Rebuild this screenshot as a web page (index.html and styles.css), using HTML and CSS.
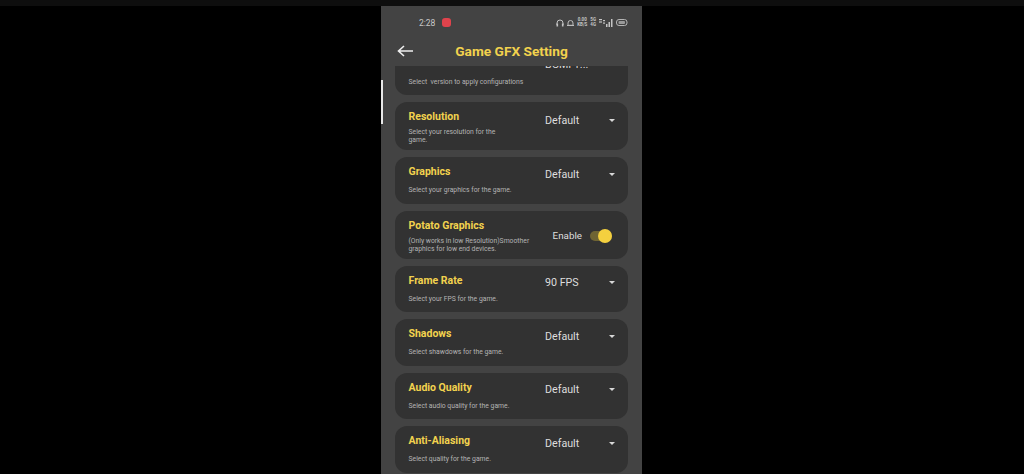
FILE: index.html
```html
<!DOCTYPE html>
<html lang="en">
<head>
<meta charset="utf-8">
<title>Game GFX Setting</title>
<link rel="stylesheet" href="styles.css">
</head>
<body>
<div class="topband"></div>
<main class="phone">
  <div class="scrollmark"></div>
  <div class="status">
    <span class="time">2:28</span>
    <span class="rec"></span>
    <span class="status-icons">
      <svg class="ic" width="8" height="8" viewBox="0 0 8 8"><path d="M1 6V4a3 3 0 0 1 6 0v2" fill="none" stroke="#c4c4c4" stroke-width="1"/><rect x=".5" y="4.5" width="1.6" height="3" fill="#c4c4c4"/><rect x="5.9" y="4.5" width="1.6" height="3" fill="#c4c4c4"/></svg>
      <svg class="ic" width="7" height="8" viewBox="0 0 7 8"><path d="M1 6.3V4a2.5 2.5 0 0 1 5 0v2.3z" fill="none" stroke="#bdbdbd"/><rect x="0" y="6" width="7" height="1" fill="#bdbdbd"/></svg>
      <span class="speed">0.00<br>KB/S</span>
      <span class="net">5G<br>4G</span>
      <svg class="ic" width="14" height="8" viewBox="0 0 14 8"><g fill="#c4c4c4"><rect x="0" y="0" width="3" height="1.2"/><rect x="0" y="2.4" width="3" height="1.2"/><rect x="4" y="1" width="2" height="1.2"/><rect x="4" y="3.5" width="2" height="1.2"/><rect x="7" y="5" width="1.5" height="3"/><rect x="9.5" y="3" width="1.5" height="5"/><rect x="12" y="0" width="1.5" height="8"/></g></svg>
      <svg class="ic" width="12" height="7" viewBox="0 0 12 7"><rect x=".5" y=".5" width="10.5" height="6" rx="2.5" fill="none" stroke="#b5b5b5"/><rect x="2.5" y="2" width="6.5" height="3" rx="1" fill="#9a9a9a"/></svg>
    </span>
  </div>
  <header class="appbar">
    <svg class="back" width="17" height="12" viewBox="0 0 17 12"><path d="M16 6H2M7 1 1.5 6 7 11" fill="none" stroke="#efefef" stroke-width="1.6"/></svg>
    <h1>Game GFX Setting</h1>
  </header>
  <section class="list">
    <article class="card clipped">
      <div class="info"><h2>Version</h2><p>Select &nbsp;version to apply configurations</p></div>
      <div class="control"><span class="value">BGMI 1...</span><span class="caret"></span></div>
    </article>
    <article class="card tall">
      <div class="info narrow"><h2>Resolution</h2><p>Select your resolution for the game.</p></div>
      <div class="control"><span class="value">Default</span><span class="caret"></span></div>
    </article>
    <article class="card">
      <div class="info"><h2>Graphics</h2><p>Select your graphics for the game.</p></div>
      <div class="control"><span class="value">Default</span><span class="caret"></span></div>
    </article>
    <article class="card tall">
      <div class="info"><h2>Potato Graphics</h2><p>(Only works in low Resolution)Smoother graphics for low end devices.</p></div>
      <div class="toggle-wrap"><span class="toggle-label">Enable</span><span class="switch"><span class="knob"></span></span></div>
    </article>
    <article class="card">
      <div class="info"><h2>Frame Rate</h2><p>Select your FPS for the game.</p></div>
      <div class="control"><span class="value">90 FPS</span><span class="caret"></span></div>
    </article>
    <article class="card">
      <div class="info"><h2>Shadows</h2><p>Select shawdows for the game.</p></div>
      <div class="control"><span class="value">Default</span><span class="caret"></span></div>
    </article>
    <article class="card">
      <div class="info"><h2>Audio Quality</h2><p>Select audio quality for the game.</p></div>
      <div class="control"><span class="value">Default</span><span class="caret"></span></div>
    </article>
    <article class="card">
      <div class="info"><h2>Anti-Aliasing</h2><p>Select quality for the game.</p></div>
      <div class="control"><span class="value">Default</span><span class="caret"></span></div>
    </article>
  </section>
</main>
</body>
</html>
```
FILE: styles.css
```css
* { box-sizing: border-box; }
html, body { margin: 0; height: 474px; overflow: hidden; background: #000; font-family: Roboto, "Liberation Sans", sans-serif; }
.topband { height: 6px; background: #0e0e0e; }
.phone { position: relative; width: 261px; height: 468px; margin-left: 381px; background: #434343; display: flex; flex-direction: column; overflow: hidden; }
.scrollmark { position: absolute; left: 0; top: 74px; width: 2px; height: 44px; background: #e8e8e8; }
.status { height: 33px; flex: none; display: flex; align-items: center; padding: 0 14px 0 38px; color: #c8c8c8; }
.time { font-size: 8.5px; }
.rec { width: 9px; height: 9px; margin-left: 7px; border-radius: 3px; background: #e0434c; }
.status-icons { margin-left: auto; display: flex; align-items: center; gap: 3px; }
.ic { display: block; }
.speed, .net { font-size: 4.5px; line-height: 4.5px; font-weight: 700; color: #c4c4c4; text-align: center; }
.appbar { height: 27px; flex: none; display: flex; align-items: center; position: relative; justify-content: center; padding-bottom: 3px; }
.back { position: absolute; left: 16px; top: 6px; }
.appbar h1 { margin: 0; font-size: 13.7px; font-weight: 700; color: #f2d24e; }
.list { flex: 1; min-height: 0; overflow: hidden; padding: 0 14px; display: flex; flex-direction: column; gap: 7px; }
.card { flex: none; height: 46.5px; background: #323232; border-radius: 12px; display: flex; justify-content: space-between; padding: 8px 14px 0 13.5px; }
.card.tall { height: 48px; }
.card.clipped { height: 48px; margin-top: -19px; }
.info { width: 125px; }
.info.narrow { width: 100px; }
.info h2 { margin: 0; font-size: 10.5px; line-height: 14px; font-weight: 700; color: #f2d24e; }
.info p { margin: 7px 0 0; font-size: 6.8px; line-height: 8px; color: #b4b4b4; }
.card.tall .info p { margin-top: 4px; }
.card.clipped .info p { margin-top: 9px; }
.control { width: 69px; height: 20px; margin-top: -1px; display: flex; justify-content: space-between; align-items: center; }
.card.tall .control { margin-top: 0; }
.value { font-size: 10.7px; color: #dedede; }
.toggle-label { font-size: 9.8px; color: #dedede; }
.caret { width: 0; height: 0; border-left: 3.5px solid transparent; border-right: 3.5px solid transparent; border-top: 3.5px solid #d8d8d8; margin-right: -1px; }
.toggle-wrap { display: flex; align-items: center; gap: 8px; height: 20px; margin-top: 7px; margin-right: 2px; }
.switch { position: relative; display: block; width: 22px; height: 10px; border-radius: 5px; background: #6f6433; }
.knob { position: absolute; right: 0; top: -2px; width: 14px; height: 14px; border-radius: 50%; background: #f4d03f; }
```
